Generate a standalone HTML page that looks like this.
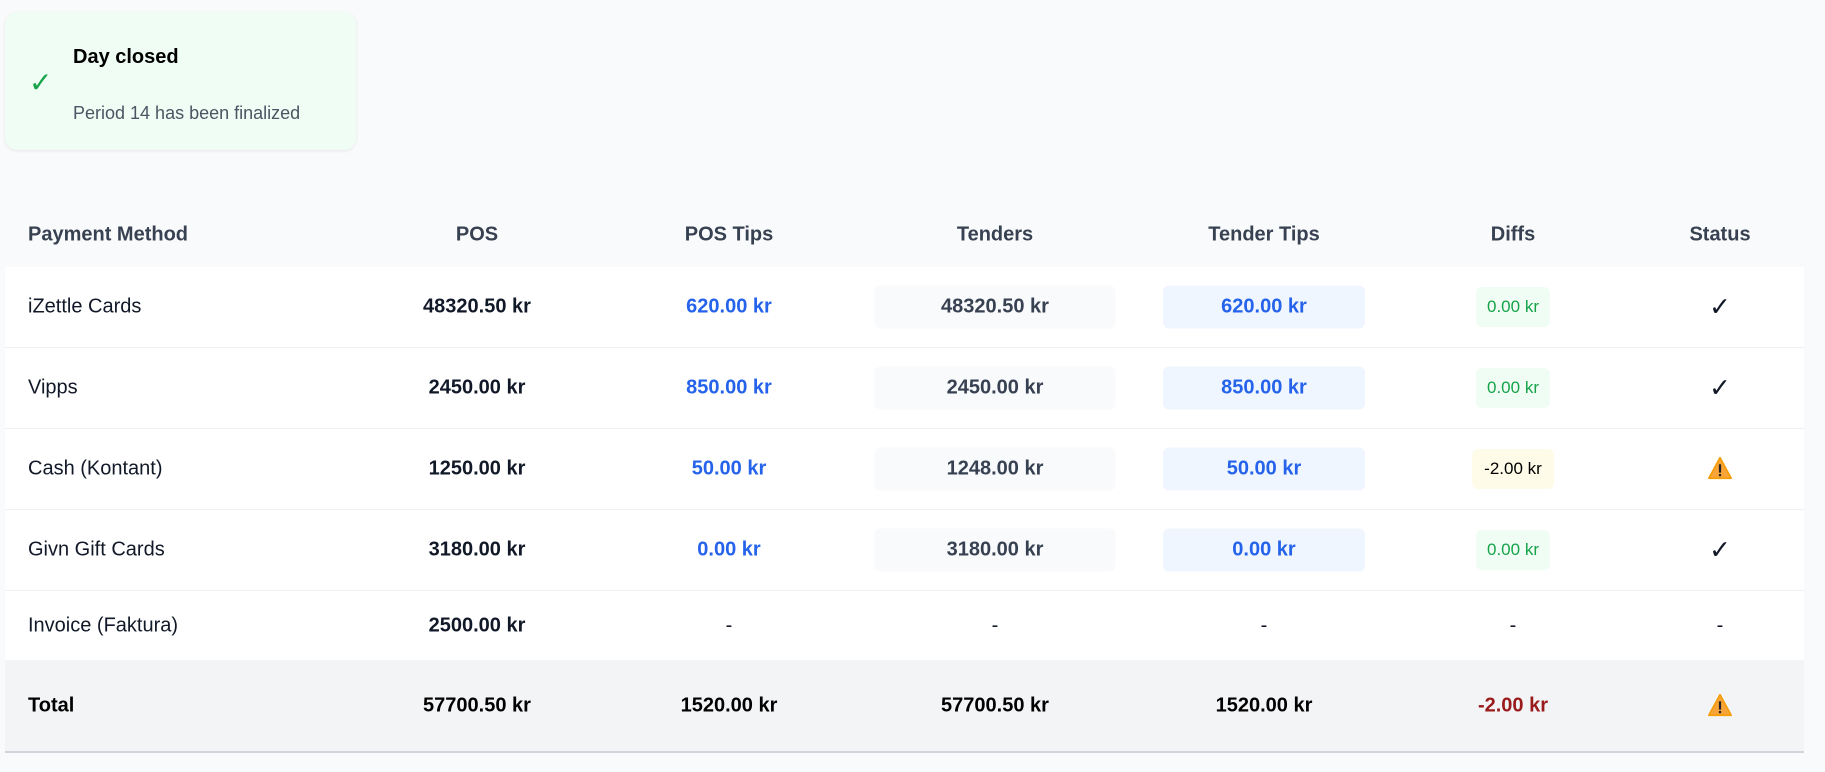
<!DOCTYPE html>
<html><head><meta charset="utf-8"><style>
*{margin:0;padding:0;box-sizing:border-box}
body{width:1825px;height:772px;background:#f9fafb;font-family:"Liberation Sans",Arial,sans-serif;color:#111827;position:relative;overflow:hidden}
.card{position:absolute;left:5px;top:12px;width:351px;height:138px;background:#f0fdf4;border-radius:12px;box-shadow:0 1px 3px rgba(0,0,0,.08)}
.card .chk{position:absolute;left:24px;top:54px;color:#16a34a;font-size:28px}
.card .t{position:absolute;left:68px;top:34px;font-weight:bold;font-size:20px;color:#000}
.card .s{position:absolute;left:68px;top:91px;font-size:18px;color:#4b5563}
.row{position:absolute;left:5px;width:1799px}
.c{position:absolute;top:50%;transform:translate(-50%,-50%);white-space:nowrap;font-size:20px}
.l{position:absolute;top:50%;transform:translateY(-50%);left:23px;font-size:20px}
.hdr .c,.hdr .l{font-weight:bold;color:#374151}
.body{background:#fff;border-bottom:1px solid #f0f1f3}
.b{font-weight:bold}
.blue{color:#2563eb}
.tb{background:#f8fafc;color:#374151;width:241px;height:43px;line-height:43px;text-align:center;border-radius:6px}
.ttb{background:#eff6ff;color:#2563eb;width:202px;height:43px;line-height:43px;text-align:center;border-radius:6px}
.dg{background:#f0fdf4;color:#16a34a;font-size:17px;padding:0 11px;height:40px;line-height:40px;border-radius:6px}
.dy{background:#fefce8;color:#000;font-size:17px;padding:0 12px;height:40px;line-height:40px;border-radius:6px}
.ck{font-size:26px}
.tot{background:#f3f4f6;border-bottom:2px solid #d1d5db}
.tot .c,.tot .l{font-weight:bold;color:#000}
</style></head><body>
<div class="card"><span class="chk">✓</span><div class="t">Day closed</div><div class="s">Period 14 has been finalized</div></div>

<div class="row hdr" style="top:212px;height:46px">
<span class="l">Payment Method</span><span class="c" style="left:472px">POS</span><span class="c" style="left:724px">POS Tips</span><span class="c" style="left:990px">Tenders</span><span class="c" style="left:1259px">Tender Tips</span><span class="c" style="left:1508px">Diffs</span><span class="c" style="left:1715px">Status</span></div>

<div class="row body" style="top:267px;height:81px"><span class="l">iZettle Cards</span><span class="c b" style="left:472px">48320.50 kr</span><span class="c b blue" style="left:724px">620.00 kr</span><span class="c b tb" style="left:990px">48320.50 kr</span><span class="c b ttb" style="left:1259px">620.00 kr</span><span class="c dg" style="left:1508px">0.00 kr</span><span class="c ck" style="left:1715px">✓</span></div>
<div class="row body" style="top:348px;height:81px"><span class="l">Vipps</span><span class="c b" style="left:472px">2450.00 kr</span><span class="c b blue" style="left:724px">850.00 kr</span><span class="c b tb" style="left:990px">2450.00 kr</span><span class="c b ttb" style="left:1259px">850.00 kr</span><span class="c dg" style="left:1508px">0.00 kr</span><span class="c ck" style="left:1715px">✓</span></div>
<div class="row body" style="top:429px;height:81px"><span class="l">Cash (Kontant)</span><span class="c b" style="left:472px">1250.00 kr</span><span class="c b blue" style="left:724px">50.00 kr</span><span class="c b tb" style="left:990px">1248.00 kr</span><span class="c b ttb" style="left:1259px">50.00 kr</span><span class="c dy" style="left:1508px">-2.00 kr</span><span class="c" style="left:1715px;top:53%"><svg width="26" height="24" viewBox="0 0 28 26"><path d="M14 2 L26 24 H2 Z" fill="#f9a43b" stroke="#f59e0b" stroke-linejoin="round" stroke-width="2"/><rect x="12.8" y="9" width="2.4" height="9" fill="#222"/><rect x="12.8" y="19.5" width="2.4" height="2.4" fill="#222"/></svg></span></div>
<div class="row body" style="top:510px;height:81px"><span class="l">Givn Gift Cards</span><span class="c b" style="left:472px">3180.00 kr</span><span class="c b blue" style="left:724px">0.00 kr</span><span class="c b tb" style="left:990px">3180.00 kr</span><span class="c b ttb" style="left:1259px">0.00 kr</span><span class="c dg" style="left:1508px">0.00 kr</span><span class="c ck" style="left:1715px">✓</span></div>
<div class="row body" style="top:591px;height:69px;border-bottom:none"><span class="l">Invoice (Faktura)</span><span class="c b" style="left:472px">2500.00 kr</span><span class="c" style="left:724px">-</span><span class="c" style="left:990px">-</span><span class="c" style="left:1259px">-</span><span class="c" style="left:1508px">-</span><span class="c" style="left:1715px">-</span></div>
<div class="row tot" style="top:660px;height:93px"><span class="l">Total</span><span class="c" style="left:472px">57700.50 kr</span><span class="c" style="left:724px">1520.00 kr</span><span class="c" style="left:990px">57700.50 kr</span><span class="c" style="left:1259px">1520.00 kr</span><span class="c" style="left:1508px;color:#991b1b">-2.00 kr</span><span class="c" style="left:1715px;top:53%"><svg width="26" height="24" viewBox="0 0 28 26"><path d="M14 2 L26 24 H2 Z" fill="#f9a43b" stroke="#f59e0b" stroke-linejoin="round" stroke-width="2"/><rect x="12.8" y="9" width="2.4" height="9" fill="#222"/><rect x="12.8" y="19.5" width="2.4" height="2.4" fill="#222"/></svg></span></div>
</body></html>
